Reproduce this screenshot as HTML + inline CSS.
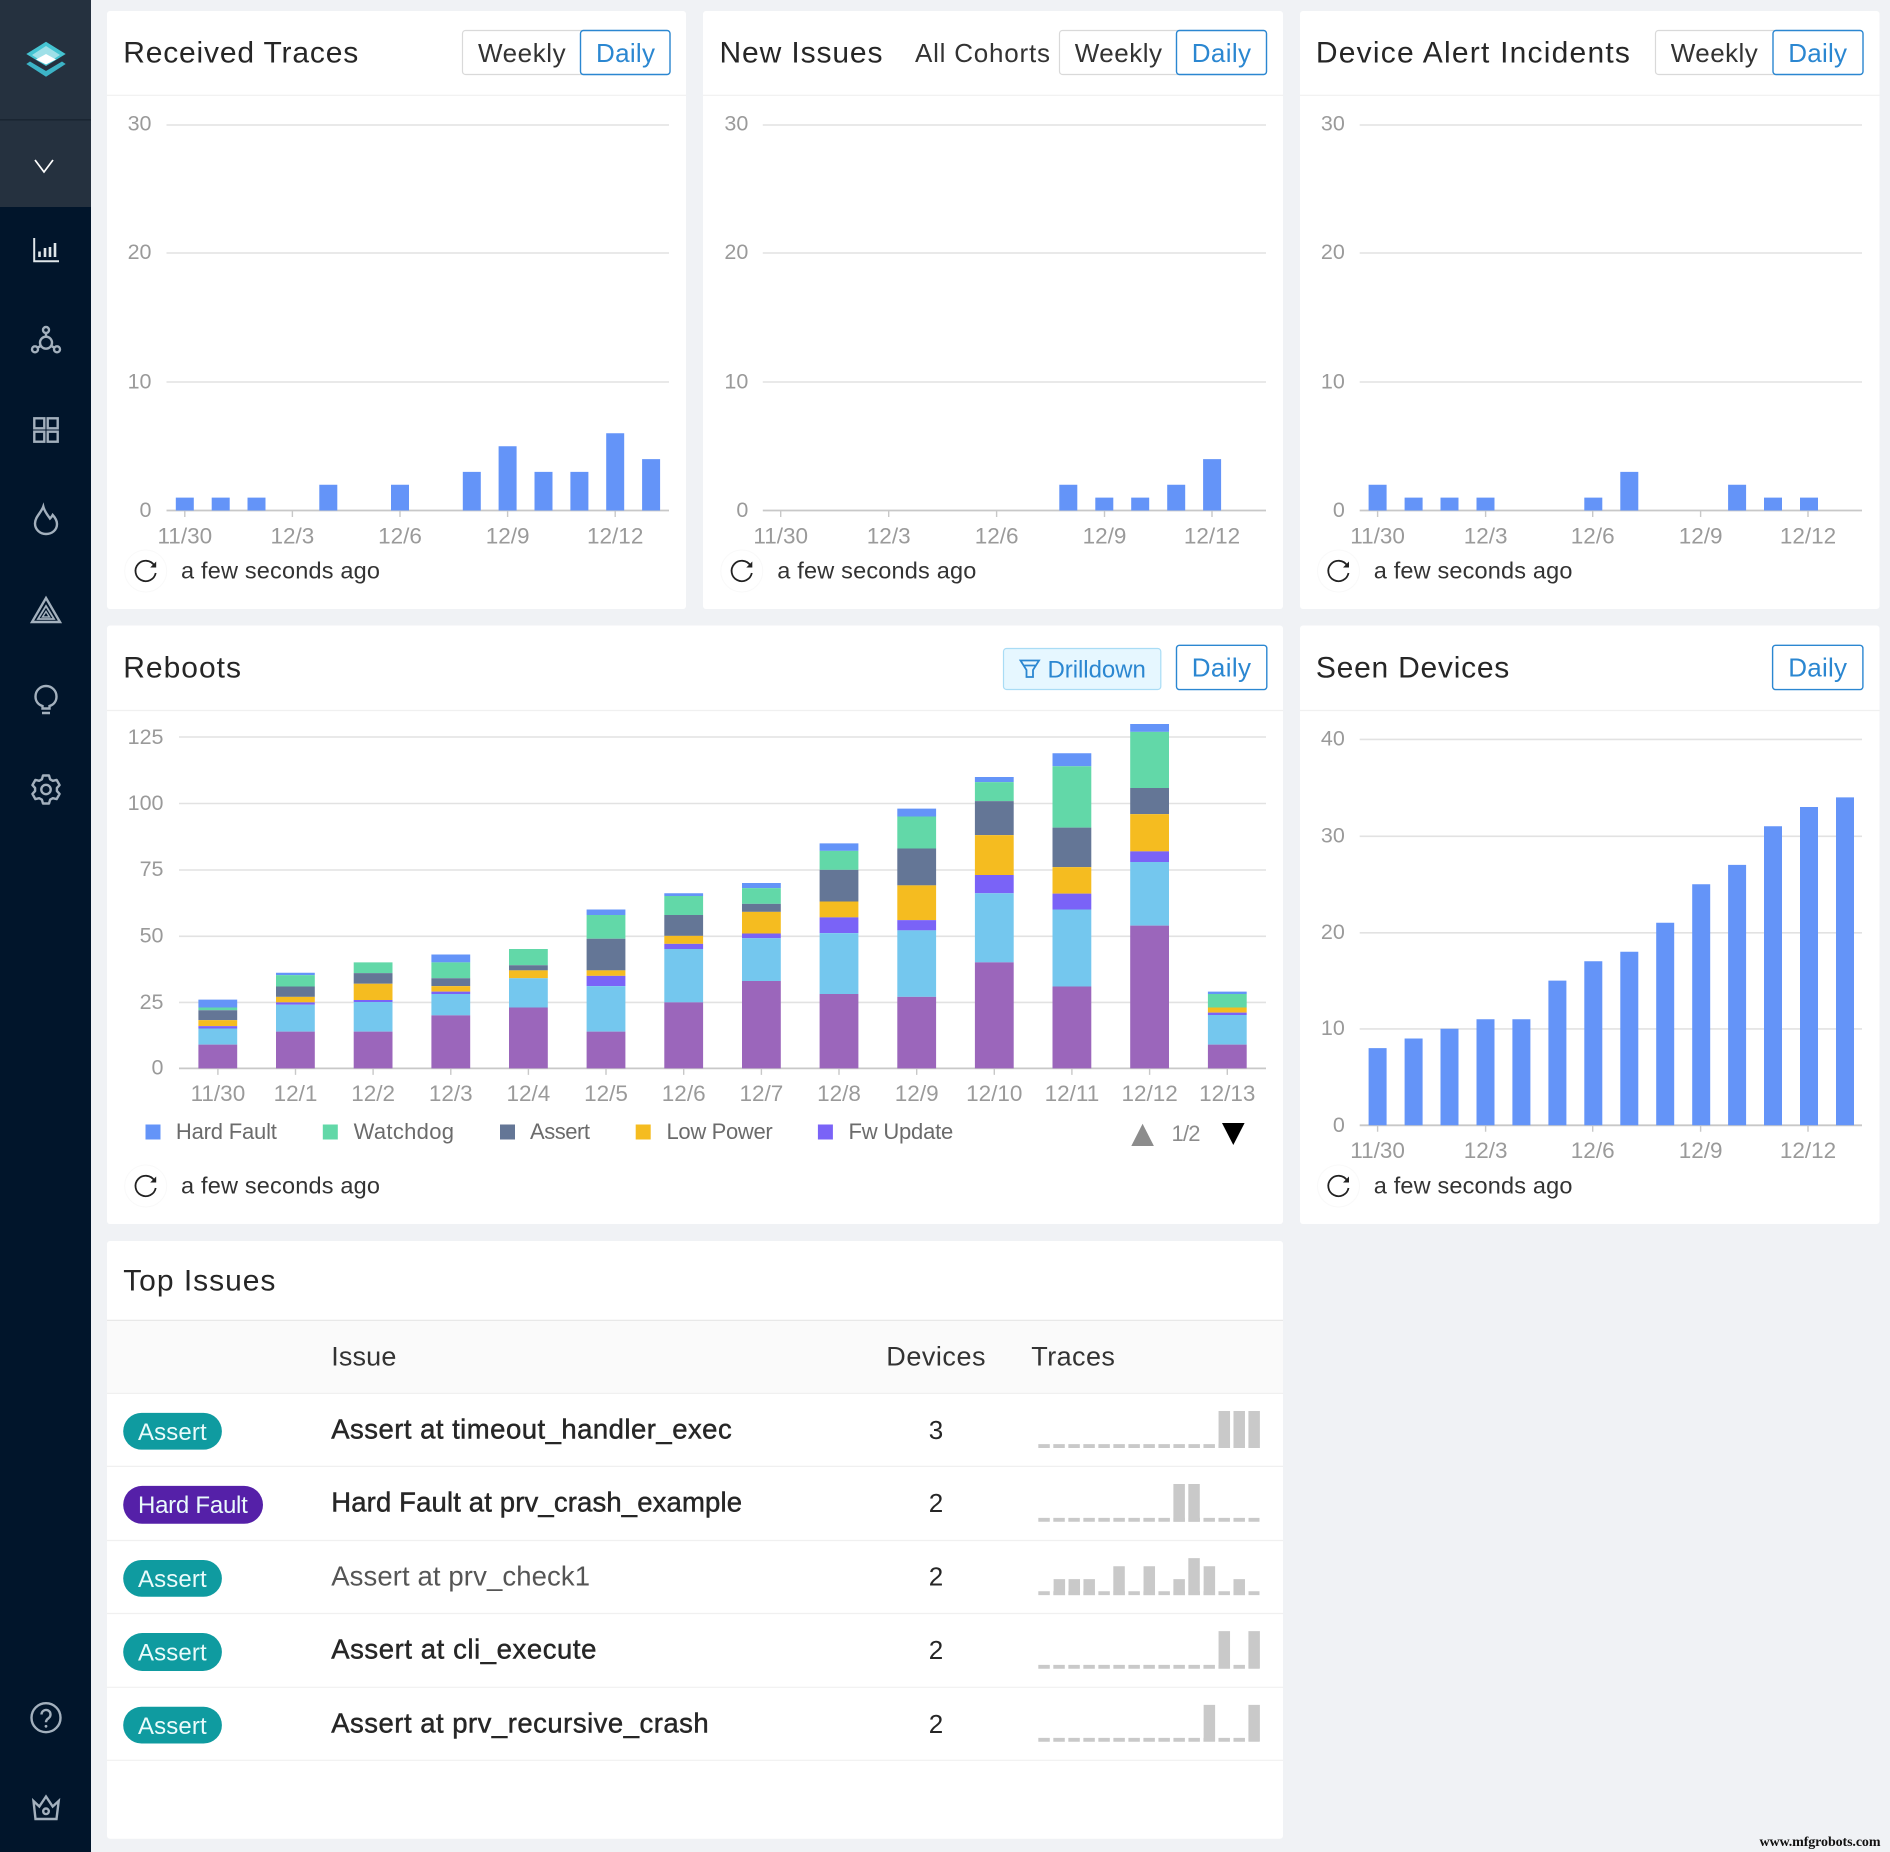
<!DOCTYPE html>
<html lang="en"><head><meta charset="utf-8"><title>Dashboard</title>
<style>
html,body{margin:0;padding:0;background:#f0f2f5}
svg{display:block}
text{font-family:"Liberation Sans",sans-serif}
.t{font-size:30px;fill:#262626}
.b{font-size:26px;fill:#333}
.d{font-size:26px;fill:#2b87d1}
.y{font-size:21.5px;fill:#9a9a9a;text-anchor:end}
.x{font-size:22.5px;fill:#9a9a9a;text-anchor:middle}
.f{font-size:23.5px;fill:#333}
.l{font-size:22px;fill:#6b6b6b}
.i{font-size:27.5px;fill:#262626;stroke:#262626;stroke-width:.45}
.n{font-size:26px;fill:#262626;text-anchor:middle}
.h{font-size:27px;fill:#333}
.p{font-size:24px;fill:#eafbfb}
.g{stroke:#e2e2e2;stroke-width:1.6;fill:none}
.a{stroke:#c8c8c8;stroke-width:1.8;fill:none}
.k{stroke:#c8c8c8;stroke-width:1.4;fill:none}
.s{fill:none;stroke:#a3b0bd;stroke-width:2.4}
.w{fill:#fff;stroke:#d9d9d9;stroke-width:1.2}
.o{fill:#fff;stroke:#2b87d1;stroke-width:1.4}
.r{fill:none;stroke:#222;stroke-width:1.8}
</style></head><body>
<svg width="1890" height="1852" viewBox="0 0 1890 1852" xmlns="http://www.w3.org/2000/svg">
<rect width="1890" height="1852" fill="#f0f2f5"/>

<!-- sidebar -->
<rect width="91" height="1852" fill="#01152b"/>
<rect width="91" height="207" fill="#25313f"/>
<rect y="119" width="91" height="1.6" fill="#1a2532"/>
<polygon points="46,41.7 65.7,54 46,66 26.3,54" fill="#45c4d2"/>
<polygon points="46,46 60,55 46,64 32,55" fill="#9fe0e8"/>
<polygon points="46,54 56,59.5 46,64.5 36,59.5" fill="#fff"/>
<polygon points="26.3,64 30,61.5 46,71 62,61.5 65.7,64 46,76.7" fill="#3cb3c6"/>
<path d="M35 160l9 12 9-12" fill="none" stroke="#fff" stroke-width="1.7"/>
<path d="M34.2 238V261.3H59" fill="none" stroke="#dfe6ea" stroke-width="2"/><path d="M39.5 257v-5.5M45 257v-9M50 257v-10M55 257v-14" fill="none" stroke="#dfe6ea" stroke-width="2.6"/>
<g class="s">
<circle cx="46" cy="342.7" r="6"/><circle cx="46" cy="330" r="3"/><circle cx="35" cy="349.3" r="3"/><circle cx="57" cy="349.3" r="3"/>
<path d="M46 333v4M37.6 347.8l3.2-2M54.4 347.8l-3.2-2"/>
<rect x="34.3" y="418.3" width="10" height="10"/><rect x="47.7" y="418.3" width="10" height="10"/><rect x="34.3" y="431.7" width="10" height="10"/><rect x="47.7" y="431.7" width="10" height="10"/>
<path d="M43.3 506.5C44.5 511.5 47.5 515 50 518.5C51 517.5 52 516.5 52.7 515C55.5 518 57 521 57 524C57 530 52 534 46 534C40 534 35 529.5 35 523.5C35 517 41 513 43.3 506.5Z"/>
<path d="M46 598L60 622H32Z"/><path d="M46 606L54 619H38Z" stroke-width="1.8"/><path d="M46 611.5L49.5 617H42.5Z" stroke-width="1.5"/>
<path d="M42.5 708.5V706C38 704.5 35.5 701 35.5 696.5A10.5 10.5 0 0 1 56.5 696.5C56.5 701 54 704.5 49.5 706V708.5ZM42 713H50"/>
<path stroke-linejoin="round" d="M41.9 779.3L43 775.5H49L50.1 779.3L52.8 780.8L56.6 779.9L59.6 785.1L56.9 788V791L59.6 793.9L56.6 799.1L52.8 798.2L50.1 799.7L49 803.5H43L41.9 799.7L39.2 798.2L35.4 799.1L32.4 793.9L35.1 791V788L32.4 785.1L35.4 779.9L39.2 780.8Z"/>
<circle cx="46" cy="789.5" r="4.7"/>
<circle cx="46" cy="1717.7" r="14.5"/>
<path d="M41.5 1714.5a4.5 4.5 0 1 1 7 3.7c-1.6 1.1-2.5 2-2.5 4"/>
<path d="M33.5 1801L39.3 1806.5L46 1796.5L52.7 1806.5L58.7 1801L56.5 1819H35.5Z"/><circle cx="46" cy="1811.3" r="2.8"/>
</g>
<circle cx="46" cy="1726.3" r="1.4" fill="#a3b0bd"/>

<!-- cards -->
<g fill="#fff">
<rect x="107" y="11" width="579" height="598" rx="3"/>
<rect x="703" y="11" width="580" height="598" rx="3"/>
<rect x="1300" y="11" width="579.5" height="598" rx="3"/>
<rect x="107" y="625.5" width="1176" height="598.5" rx="3"/>
<rect x="1300" y="625.5" width="579.5" height="598.5" rx="3"/>
<rect x="107" y="1241" width="1176" height="597.7" rx="3"/>
</g>
<path stroke="#f0f0f0" stroke-width="1.2" d="M107 95.3H686M703 95.3H1283M1300 95.3H1879.5M107 710.5H1283M1300 710.5H1879.5"/>

<!-- card 1 -->
<text class="t" x="123.2" y="62.5" textLength="235">Received Traces</text>
<rect class="w" x="462.5" y="30.5" width="207.5" height="44" rx="3"/><rect class="o" x="580.5" y="30.5" width="89.5" height="44" rx="3"/>
<text class="b" x="478" y="62" textLength="87.6">Weekly</text><text class="d" x="596" y="62" textLength="59">Daily</text>
<path class="g" d="M166.5 125H669M166.5 253H669M166.5 382H669"/><path class="a" d="M166.5 510.5H669"/>
<path class="k" d="M184.8 510.5v6.5M292.4 510.5v6.5M400 510.5v6.5M507.6 510.5v6.5M615.2 510.5v6.5"/>
<path fill="#6494f8" d="M175.8 510.5v-12.9h18v12.9zM211.7 510.5v-12.9h18v12.9zM247.5 510.5v-12.9h18v12.9zM319.3 510.5v-25.7h18v25.7zM391 510.5v-25.7h18v25.7zM462.8 510.5v-38.6h18v38.6zM498.6 510.5v-64.3h18v64.3zM534.5 510.5v-38.6h18v38.6zM570.4 510.5v-38.6h18v38.6zM606.2 510.5v-77.2h18v77.2zM642.1 510.5v-51.4h18v51.4z"/>
<text class="y" x="151.5" y="130.5">30</text><text class="y" x="151.5" y="259">20</text><text class="y" x="151.5" y="388.5">10</text><text class="y" x="151.5" y="516.8">0</text>
<text class="x" x="184.8" y="543.7">11/30</text><text class="x" x="292.4" y="543.7">12/3</text><text class="x" x="400" y="543.7">12/6</text><text class="x" x="507.6" y="543.7">12/9</text><text class="x" x="615.2" y="543.7">12/12</text>
<g transform="translate(145.7 571)"><circle r="21" fill="#fff" stroke="#f9f9f9"/><path class="r" d="M8.6-5.5A10.2 10.2 0 1 0 10 2"/><path fill="#222" d="M10.5-9.5V-3.5H4.5z"/></g>
<text class="f" x="181" y="578.5" textLength="199">a few seconds ago</text>

<!-- card 2 -->
<text class="t" x="719.5" y="62.5" textLength="163">New Issues</text>
<text class="b" x="915" y="62" textLength="135" fill="#444">All Cohorts</text>
<rect class="w" x="1059.5" y="30.5" width="207" height="44" rx="3"/><rect class="o" x="1176.5" y="30.5" width="90" height="44" rx="3"/>
<text class="b" x="1074.7" y="62" textLength="87.3">Weekly</text><text class="d" x="1191.8" y="62" textLength="59.2">Daily</text>
<path class="g" d="M762.8 125H1266M762.8 253H1266M762.8 382H1266"/><path class="a" d="M762.8 510.5H1266"/>
<path class="k" d="M780.7 510.5v6.5M888.7 510.5v6.5M996.6 510.5v6.5M1104.5 510.5v6.5M1212 510.5v6.5"/>
<path fill="#6494f8" d="M1059.3 510.5v-25.7h18v25.7zM1095.3 510.5v-12.9h18v12.9zM1131.2 510.5v-12.9h18v12.9zM1167.2 510.5v-25.7h18v25.7zM1203.1 510.5v-51.4h18v51.4z"/>
<text class="y" x="748.3" y="130.5">30</text><text class="y" x="748.3" y="259">20</text><text class="y" x="748.3" y="388.5">10</text><text class="y" x="748.3" y="516.8">0</text>
<text class="x" x="780.7" y="543.7">11/30</text><text class="x" x="888.7" y="543.7">12/3</text><text class="x" x="996.6" y="543.7">12/6</text><text class="x" x="1104.5" y="543.7">12/9</text><text class="x" x="1212" y="543.7">12/12</text>
<g transform="translate(741.8 571)"><circle r="21" fill="#fff" stroke="#f9f9f9"/><path class="r" d="M8.6-5.5A10.2 10.2 0 1 0 10 2"/><path fill="#222" d="M10.5-9.5V-3.5H4.5z"/></g>
<text class="f" x="777.3" y="578.5" textLength="199">a few seconds ago</text>

<!-- card 3 -->
<text class="t" x="1315.9" y="62.5" textLength="314">Device Alert Incidents</text>
<rect class="w" x="1655.5" y="30.5" width="207.5" height="44" rx="3"/><rect class="o" x="1773" y="30.5" width="90" height="44" rx="3"/>
<text class="b" x="1670.8" y="62" textLength="86.9">Weekly</text><text class="d" x="1788.3" y="62" textLength="58.7">Daily</text>
<path class="g" d="M1359.7 125H1862M1359.7 253H1862M1359.7 382H1862"/><path class="a" d="M1359.7 510.5H1862"/>
<path class="k" d="M1377.6 510.5v6.5M1485.6 510.5v6.5M1592.7 510.5v6.5M1700.6 510.5v6.5M1808 510.5v6.5"/>
<path fill="#6494f8" d="M1368.6 510.5v-25.7h18v25.7zM1404.6 510.5v-12.9h18v12.9zM1440.5 510.5v-12.9h18v12.9zM1476.5 510.5v-12.9h18v12.9zM1584.3 510.5v-12.9h18v12.9zM1620.3 510.5v-38.6h18v38.6zM1728.1 510.5v-25.7h18v25.7zM1764 510.5v-12.9h18v12.9zM1800 510.5v-12.9h18v12.9z"/>
<text class="y" x="1344.8" y="130.5">30</text><text class="y" x="1344.8" y="259">20</text><text class="y" x="1344.8" y="388.5">10</text><text class="y" x="1344.8" y="516.8">0</text>
<text class="x" x="1377.6" y="543.7">11/30</text><text class="x" x="1485.6" y="543.7">12/3</text><text class="x" x="1592.7" y="543.7">12/6</text><text class="x" x="1700.6" y="543.7">12/9</text><text class="x" x="1808" y="543.7">12/12</text>
<g transform="translate(1338.5 571)"><circle r="21" fill="#fff" stroke="#f9f9f9"/><path class="r" d="M8.6-5.5A10.2 10.2 0 1 0 10 2"/><path fill="#222" d="M10.5-9.5V-3.5H4.5z"/></g>
<text class="f" x="1373.8" y="578.5" textLength="198.6">a few seconds ago</text>

<!-- reboots -->
<text class="t" x="123.2" y="677.7" textLength="117.8">Reboots</text>
<rect x="1003.5" y="648.5" width="157.3" height="41" rx="3" fill="#e6f7ff" stroke="#a9dcf5" stroke-width="1.2"/>
<path d="M1020.5 660.5H1039L1033 670V677H1026.5V670ZM1023.5 665.5H1036" fill="none" stroke="#2b87d1" stroke-width="1.8"/>
<text x="1047.5" y="677.5" font-size="24" fill="#2b87d1" textLength="98.3">Drilldown</text>
<rect class="o" x="1176.5" y="645.3" width="90.3" height="44.3" rx="3"/>
<text class="d" x="1191.8" y="676.5" textLength="59.2">Daily</text>
<path class="g" d="M179 737H1266M179 803.5H1266M179 870H1266M179 936.3H1266M179 1002.4H1266"/><path class="a" d="M179 1068.4H1266"/>
<path class="k" d="M217.9 1068.4v6.5M295.5 1068.4v6.5M373.1 1068.4v6.5M450.8 1068.4v6.5M528.4 1068.4v6.5M606 1068.4v6.5M683.7 1068.4v6.5M761.4 1068.4v6.5M839 1068.4v6.5M916.7 1068.4v6.5M994.3 1068.4v6.5M1071.9 1068.4v6.5M1149.6 1068.4v6.5M1227.3 1068.4v6.5"/>
<g transform="translate(0 620) scale(1 .39541)">
<path fill="#6494f8" d="M198.4 960h38.8V980h-38.8zM276 892h38.8V898h-38.8zM431.4 846h38.8V866h-38.8zM586.6 732h38.8V746h-38.8zM664.3 691h38.8V698h-38.8zM742 665h38.8V678h-38.8zM819.6 565h38.8V584h-38.8zM897.3 477h38.8V497h-38.8zM974.9 397h38.8V410h-38.8zM1052.5 337h38.8V370h-38.8zM1130.2 263h38.8V283h-38.8zM1207.9 940h38.8V946h-38.8z"/>
<path fill="#62d8a8" d="M198.4 980h38.8V987h-38.8zM276 898h38.8V927h-38.8zM353.7 866h38.8V893h-38.8zM431.4 866h38.8V906h-38.8zM509 832h38.8V873h-38.8zM586.6 746h38.8V806h-38.8zM664.3 698h38.8V746h-38.8zM742 678h38.8V718h-38.8zM819.6 584h38.8V632h-38.8zM897.3 497h38.8V578h-38.8zM974.9 410h38.8V458h-38.8zM1052.5 370h38.8V525h-38.8zM1130.2 283h38.8V425h-38.8zM1207.9 946h38.8V980h-38.8z"/>
<path fill="#647696" d="M198.4 987h38.8V1012h-38.8zM276 927h38.8V953h-38.8zM353.7 893h38.8V920h-38.8zM431.4 906h38.8V926h-38.8zM509 873h38.8V886h-38.8zM586.6 806h38.8V886h-38.8zM664.3 746h38.8V799h-38.8zM742 718h38.8V738h-38.8zM819.6 632h38.8V712h-38.8zM897.3 578h38.8V671h-38.8zM974.9 458h38.8V544h-38.8zM1052.5 525h38.8V625h-38.8zM1130.2 425h38.8V491h-38.8z"/>
<path fill="#f5bc20" d="M198.4 1012h38.8V1027h-38.8zM276 953h38.8V967h-38.8zM353.7 920h38.8V961h-38.8zM431.4 926h38.8V940h-38.8zM509 886h38.8V906h-38.8zM586.6 886h38.8V900h-38.8zM664.3 799h38.8V819h-38.8zM742 738h38.8V793h-38.8zM819.6 712h38.8V752h-38.8zM897.3 671h38.8V759h-38.8zM974.9 544h38.8V645h-38.8zM1052.5 625h38.8V692h-38.8zM1130.2 491h38.8V585h-38.8zM1207.9 980h38.8V993h-38.8z"/>
<path fill="#7a63f7" d="M198.4 1027h38.8V1033h-38.8zM276 967h38.8V973h-38.8zM353.7 961h38.8V966h-38.8zM431.4 940h38.8V946h-38.8zM586.6 900h38.8V926h-38.8zM664.3 819h38.8V832h-38.8zM742 793h38.8V805h-38.8zM819.6 752h38.8V792h-38.8zM897.3 759h38.8V785h-38.8zM974.9 645h38.8V691h-38.8zM1052.5 692h38.8V732h-38.8zM1130.2 585h38.8V612h-38.8zM1207.9 993h38.8V999h-38.8z"/>
<path fill="#74c7ee" d="M198.4 1033h38.8V1074h-38.8zM276 973h38.8V1041h-38.8zM353.7 966h38.8V1041h-38.8zM431.4 946h38.8V1000h-38.8zM509 906h38.8V980h-38.8zM586.6 926h38.8V1041h-38.8zM664.3 832h38.8V967h-38.8zM742 805h38.8V913h-38.8zM819.6 792h38.8V946h-38.8zM897.3 785h38.8V953h-38.8zM974.9 691h38.8V866h-38.8zM1052.5 732h38.8V927h-38.8zM1130.2 612h38.8V773h-38.8zM1207.9 999h38.8V1074h-38.8z"/>
<path fill="#9b66bb" d="M198.4 1074h38.8V1134h-38.8zM276 1041h38.8V1134h-38.8zM353.7 1041h38.8V1134h-38.8zM431.4 1000h38.8V1134h-38.8zM509 980h38.8V1134h-38.8zM586.6 1041h38.8V1134h-38.8zM664.3 967h38.8V1134h-38.8zM742 913h38.8V1134h-38.8zM819.6 946h38.8V1134h-38.8zM897.3 953h38.8V1134h-38.8zM974.9 866h38.8V1134h-38.8zM1052.5 927h38.8V1134h-38.8zM1130.2 773h38.8V1134h-38.8zM1207.9 1074h38.8V1134h-38.8z"/>
</g>
<text class="y" x="163.5" y="744">125</text><text class="y" x="163.5" y="810">100</text><text class="y" x="163.5" y="876">75</text><text class="y" x="163.5" y="942.6">50</text><text class="y" x="163.5" y="1009">25</text><text class="y" x="163.5" y="1074.7">0</text>
<text class="x" x="217.9" y="1101.2">11/30</text><text class="x" x="295.5" y="1101.2">12/1</text><text class="x" x="373.1" y="1101.2">12/2</text><text class="x" x="450.8" y="1101.2">12/3</text><text class="x" x="528.4" y="1101.2">12/4</text><text class="x" x="606" y="1101.2">12/5</text><text class="x" x="683.7" y="1101.2">12/6</text><text class="x" x="761.4" y="1101.2">12/7</text><text class="x" x="839" y="1101.2">12/8</text><text class="x" x="916.7" y="1101.2">12/9</text><text class="x" x="994.3" y="1101.2">12/10</text><text class="x" x="1071.9" y="1101.2">12/11</text><text class="x" x="1149.6" y="1101.2">12/12</text><text class="x" x="1227.3" y="1101.2">12/13</text>
<rect x="145.5" y="1124.5" width="15" height="15" fill="#6494f8"/><text class="l" x="175.9" y="1138.8" textLength="101">Hard Fault</text>
<rect x="322.8" y="1124.5" width="15" height="15" fill="#62d8a8"/><text class="l" x="353.6" y="1138.8" textLength="100.4">Watchdog</text>
<rect x="500" y="1124.5" width="15" height="15" fill="#647696"/><text class="l" x="530" y="1138.8" textLength="60">Assert</text>
<rect x="635.7" y="1124.5" width="15" height="15" fill="#f5bc20"/><text class="l" x="666.5" y="1138.8" textLength="106.2">Low Power</text>
<rect x="817.9" y="1124.5" width="15" height="15" fill="#7a63f7"/><text class="l" x="848.5" y="1138.8" textLength="104.8">Fw Update</text>
<polygon points="1142.6,1123.8 1153.9,1146 1131.3,1146" fill="#8c8c8c"/>
<text x="1171.5" y="1141" font-size="22" fill="#8c8c8c" textLength="29">1/2</text>
<polygon points="1222,1123 1244.6,1123 1233.3,1145" fill="#000"/>
<g transform="translate(145.7 1186)"><circle r="21" fill="#fff" stroke="#f9f9f9"/><path class="r" d="M8.6-5.5A10.2 10.2 0 1 0 10 2"/><path fill="#222" d="M10.5-9.5V-3.5H4.5z"/></g>
<text class="f" x="181" y="1193.7" textLength="199">a few seconds ago</text>

<!-- seen devices -->
<text class="t" x="1315.9" y="677.7" textLength="193.4">Seen Devices</text>
<rect class="o" x="1772.6" y="645.3" width="90.3" height="44.3" rx="3"/>
<text class="d" x="1788.3" y="676.5" textLength="58.7">Daily</text>
<path class="g" d="M1359.7 739.4H1862M1359.7 836.3H1862M1359.7 932.8H1862M1359.7 1028.9H1862"/><path class="a" d="M1359.7 1125.3H1862"/>
<path class="k" d="M1377.6 1125.3v6.5M1485.6 1125.3v6.5M1592.7 1125.3v6.5M1700.6 1125.3v6.5M1808 1125.3v6.5"/>
<path fill="#6494f8" d="M1368.6 1125.3v-77.2h18v77.2zM1404.6 1125.3v-86.8h18v86.8zM1440.5 1125.3v-96.5h18v96.5zM1476.5 1125.3v-106.1h18v106.1zM1512.4 1125.3v-106.1h18v106.1zM1548.4 1125.3v-144.7h18v144.7zM1584.3 1125.3v-164h18v164zM1620.3 1125.3v-173.6h18v173.6zM1656.2 1125.3v-202.5h18v202.5zM1692.2 1125.3v-241.1h18v241.1zM1728.1 1125.3v-260.4h18v260.4zM1764 1125.3v-299h18v299zM1800 1125.3v-318.3h18v318.3zM1836 1125.3v-327.9h18v327.9z"/>
<text class="y" x="1344.8" y="745.7">40</text><text class="y" x="1344.8" y="842.6">30</text><text class="y" x="1344.8" y="939">20</text><text class="y" x="1344.8" y="1035">10</text><text class="y" x="1344.8" y="1132">0</text>
<text class="x" x="1377.6" y="1157.8">11/30</text><text class="x" x="1485.6" y="1157.8">12/3</text><text class="x" x="1592.7" y="1157.8">12/6</text><text class="x" x="1700.6" y="1157.8">12/9</text><text class="x" x="1808" y="1157.8">12/12</text>
<g transform="translate(1338.5 1186)"><circle r="21" fill="#fff" stroke="#f9f9f9"/><path class="r" d="M8.6-5.5A10.2 10.2 0 1 0 10 2"/><path fill="#222" d="M10.5-9.5V-3.5H4.5z"/></g>
<text class="f" x="1373.8" y="1193.7" textLength="198.6">a few seconds ago</text>

<!-- top issues -->
<text class="t" x="123.2" y="1290.7" textLength="152.2">Top Issues</text>
<rect x="107" y="1320.4" width="1176" height="73" fill="#fafafa"/>
<path stroke="#e8e8e8" stroke-width="1.2" d="M107 1320.4H1283"/>
<path stroke="#f0f0f0" stroke-width="1.2" d="M107 1393.4H1283M107 1466.4H1283M107 1540.5H1283M107 1613.5H1283M107 1687.3H1283M107 1760.3H1283"/>
<text class="h" x="331.2" y="1365.5" textLength="65.2">Issue</text>
<text class="h" x="886.3" y="1365.5" textLength="99.2">Devices</text>
<text class="h" x="1031.3" y="1365.5" textLength="83.6">Traces</text>

<rect x="123.2" y="1412.9" width="98.7" height="36.7" rx="18.3" fill="#0f9ba0"/><text class="p" x="138" y="1439.8" textLength="68.7">Assert</text>
<rect x="123.2" y="1485.9" width="139.8" height="37.9" rx="18.9" fill="#5520a8"/><text class="p" x="138" y="1512.8" textLength="109.8">Hard Fault</text>
<rect x="123.2" y="1560" width="98.7" height="36.8" rx="18.4" fill="#0f9ba0"/><text class="p" x="138" y="1587" textLength="68.7">Assert</text>
<rect x="123.2" y="1633" width="98.7" height="38" rx="19" fill="#0f9ba0"/><text class="p" x="138" y="1660.4" textLength="68.7">Assert</text>
<rect x="123.2" y="1706.8" width="98.7" height="36.7" rx="18.3" fill="#0f9ba0"/><text class="p" x="138" y="1734" textLength="68.7">Assert</text>

<text class="i" x="331.2" y="1438.5" textLength="400.5">Assert at timeout_handler_exec</text>
<text class="i" x="331.2" y="1511.5" textLength="410.8">Hard Fault at prv_crash_example</text>
<text x="331.2" y="1585.5" font-size="27.5" fill="#555" textLength="258.8">Assert at prv_check1</text>
<text class="i" x="331.2" y="1658.5" textLength="265.2">Assert at cli_execute</text>
<text class="i" x="331.2" y="1732.5" textLength="377.5">Assert at prv_recursive_crash</text>

<text class="n" x="936" y="1439">3</text><text class="n" x="936" y="1512">2</text><text class="n" x="936" y="1585.4">2</text><text class="n" x="936" y="1658.8">2</text><text class="n" x="936" y="1733">2</text>

<g transform="translate(700 1240) scale(.3827 .3903)">
<path fill="none" stroke="#c9c9c9" stroke-width="10" stroke-dasharray="30 9.23" d="M884 528H1462M884 717H1462M884 905H1462M884 1093.5H1462M884 1280.5H1462"/>
<path fill="#c9c9c9" d="M1355 438h30V533h-30zM1394 438h30V533h-30zM1433 438h30V533h-30zM1237 625h30V722h-30zM1276 625h30V722h-30zM924 869h30V910h-30zM963 869h30V910h-30zM1002 869h30V910h-30zM1080 836h30V910h-30zM1159 836h30V910h-30zM1237 869h30V910h-30zM1276 815h30V910h-30zM1316 836h30V910h-30zM1394 869h30V910h-30zM1355 1002h30V1098h-30zM1433 1002h30V1098h-30zM1316 1191h30V1285h-30zM1433 1191h30V1285h-30z"/>
</g>

<text x="1759.5" y="1846" font-size="14" font-weight="700" style="font-family:'Liberation Serif',serif" fill="#111" textLength="121">www.mfgrobots.com</text>
</svg>
</body></html>
